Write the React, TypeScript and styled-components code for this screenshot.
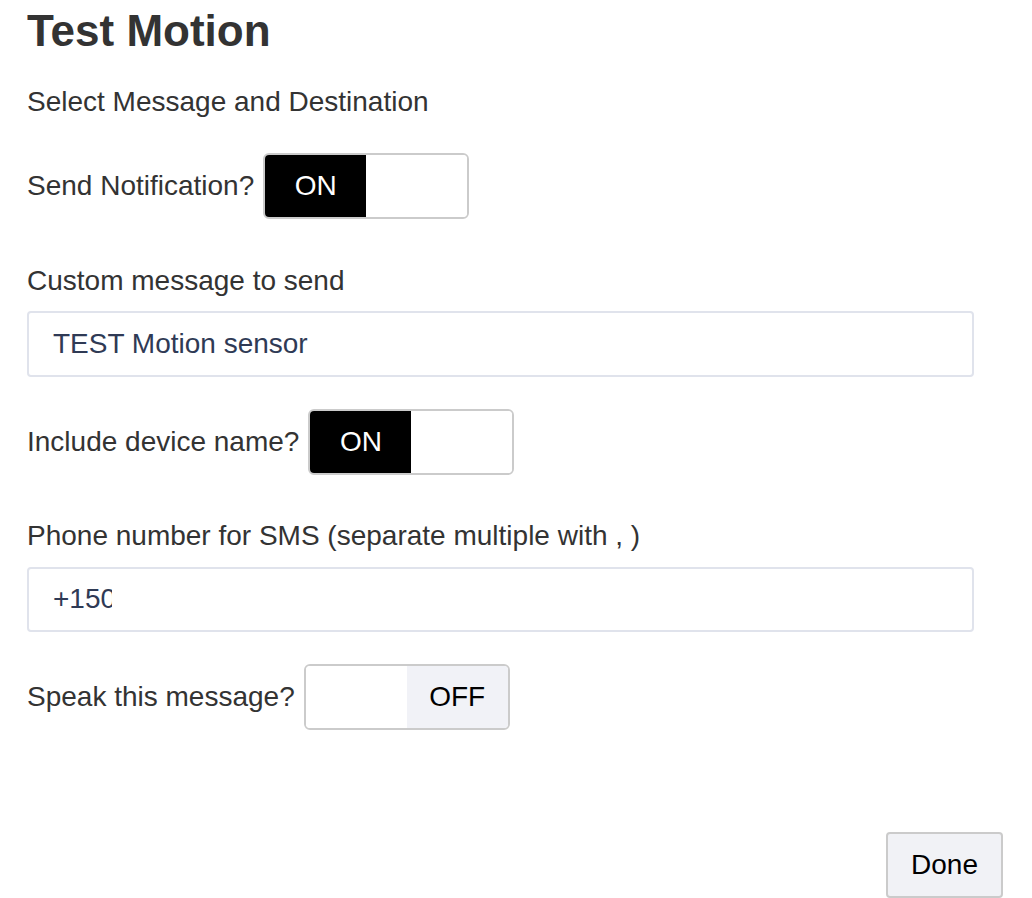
import React from "react";
import styled, { createGlobalStyle } from "styled-components";

const Global = createGlobalStyle`
  html, body {
    margin: 0;
    padding: 0;
    background: #ffffff;
    overflow: hidden;
  }
  body {
    font-family: "Liberation Sans", Arial, Helvetica, sans-serif;
    color: #333333;
  }
`;

const Page = styled.div`
  width: 1032px;
  height: 898px;
  box-sizing: border-box;
  padding: 7px 29px 0 27px;
  display: flex;
  flex-direction: column;
  overflow: hidden;
`;

const Title = styled.h1`
  margin: 0;
  font-size: 44px;
  line-height: 48px;
  font-weight: 700;
  color: #333333;
`;

const Text = styled.div<{ $mt: number }>`
  margin-top: ${(p) => p.$mt}px;
  font-size: 28px;
  line-height: 32px;
  color: #333333;
`;

const ToggleRow = styled.div<{ $mt: number }>`
  margin-top: ${(p) => p.$mt}px;
  display: flex;
  align-items: center;
  gap: 9px;
  font-size: 28px;
  line-height: 32px;
  color: #333333;
`;

const Switch = styled.div`
  display: flex;
  width: 206px;
  height: 66px;
  box-sizing: border-box;
  border: 2px solid #cbcbcb;
  border-radius: 6px;
  overflow: hidden;
  background: #ffffff;
`;

const Half = styled.div<{ $kind: "on" | "off" | "blank" }>`
  flex: 1;
  display: flex;
  align-items: center;
  justify-content: center;
  font-size: 28px;
  background: ${(p) =>
    p.$kind === "on" ? "#000000" : p.$kind === "off" ? "#f1f2f7" : "#ffffff"};
  color: ${(p) => (p.$kind === "on" ? "#ffffff" : "#000000")};
`;

const Field = styled.div<{ $mt: number }>`
  margin-top: ${(p) => p.$mt}px;
  width: 947px;
  height: 66px;
  box-sizing: border-box;
  border: 2px solid #e0e3ec;
  border-radius: 4px;
  padding-left: 24px;
  display: flex;
  align-items: center;
  font-size: 28px;
  color: #2f3a55;
  background: #ffffff;
`;

const Clip = styled.span<{ $w: number }>`
  display: inline-block;
  width: ${(p) => p.$w}px;
  overflow: hidden;
  white-space: nowrap;
`;

const Footer = styled.div`
  margin-top: 102px;
  display: flex;
  justify-content: flex-end;
`;

const DoneButton = styled.button`
  width: 117px;
  height: 66px;
  box-sizing: border-box;
  border: 2px solid #cbcbcb;
  border-radius: 4px;
  background: #f1f2f6;
  font-family: "Liberation Sans", Arial, Helvetica, sans-serif;
  font-size: 28px;
  color: #000000;
  padding: 0;
`;

function Toggle({ on }: { on: boolean }) {
  return (
    <Switch>
      {on ? (
        <>
          <Half $kind="on">ON</Half>
          <Half $kind="blank" />
        </>
      ) : (
        <>
          <Half $kind="blank" />
          <Half $kind="off">OFF</Half>
        </>
      )}
    </Switch>
  );
}

export default function App() {
  return (
    <>
      <Global />
      <Page>
        <Title>Test Motion</Title>
        <Text $mt={31}>Select Message and Destination</Text>
        <ToggleRow $mt={35}>
          <span>Send Notification?</span>
          <Toggle on />
        </ToggleRow>
        <Text $mt={46}>Custom message to send</Text>
        <Field $mt={14}>TEST Motion sensor</Field>
        <ToggleRow $mt={32}>
          <span>Include device name?</span>
          <Toggle on />
        </ToggleRow>
        <Text $mt={45}>Phone number for SMS (separate multiple with , )</Text>
        <Field $mt={15}>
          <Clip $w={59}>+150</Clip>
        </Field>
        <ToggleRow $mt={32}>
          <span>Speak this message?</span>
          <Toggle on={false} />
        </ToggleRow>
        <Footer>
          <DoneButton>Done</DoneButton>
        </Footer>
      </Page>
    </>
  );
}
